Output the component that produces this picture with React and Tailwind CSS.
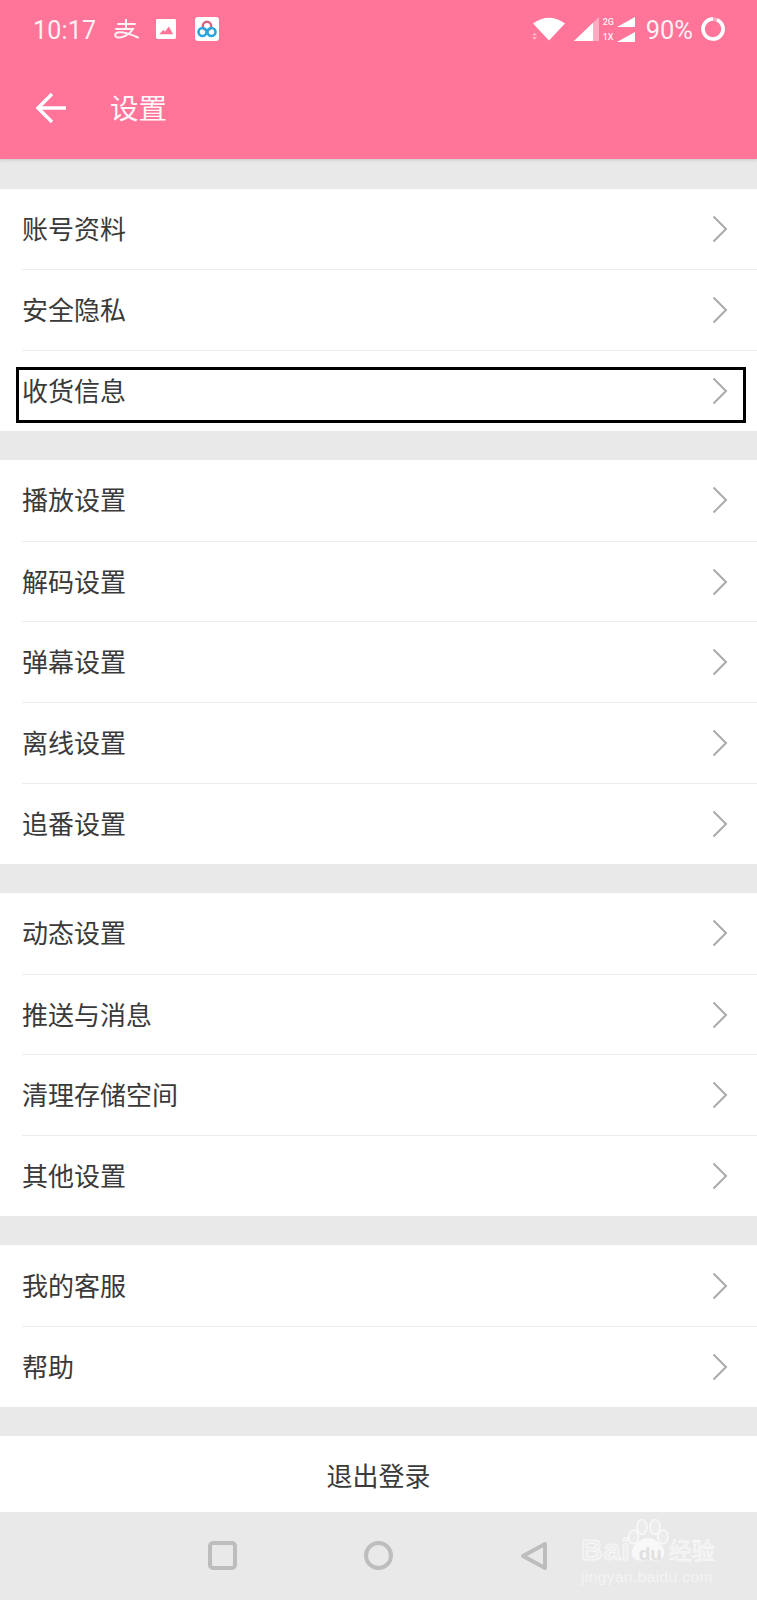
import React from 'react';

const sections = [
  ['账号资料', '安全隐私', '收货信息'],
  ['播放设置', '解码设置', '弹幕设置', '离线设置', '追番设置'],
  ['动态设置', '推送与消息', '清理存储空间', '其他设置'],
  ['我的客服', '帮助'],
];

const font = "font-['Noto_Sans_CJK_SC','Noto_Sans',sans-serif]";

const Chevron = () => (
  <svg width="16" height="28" viewBox="0 0 16 28" fill="none" className="mr-[29px]">
    <path d="M1.5 1.5 L14 14 L1.5 26.5" stroke="#aaaaaa" strokeWidth="2" />
  </svg>
);

const Row = ({ label, first, boxed }) => (
  <div className="relative h-[80.7px] pl-[22px]">
    <div className={`flex h-full items-center justify-between ${first ? '' : 'border-t border-[#ececec]'}`}>
      <span className="pb-[3px] text-[26px] text-[#3a3a3a]">{label}</span>
      <Chevron />
    </div>
    {/* marker box from the screenshot */}
    {boxed && <div className="absolute left-[16px] top-[17px] h-[56px] w-[730px] border-[3px] border-black" />}
  </div>
);

const AlipayLogo = () => (
  <svg width="26" height="20" viewBox="0 0 26 20" fill="none" stroke="#fff" strokeWidth="2" strokeLinecap="round" className="ml-[17px] opacity-90">
    <path d="M5 5 H22" />
    <path d="M13 0.5 V10" />
    <path d="M3 10 H20 C17 15 10 19 5 18.5 C1.5 18 1 14.5 5 13.5 C10 12.5 18 15.5 25 18.5" />
  </svg>
);

const StatusBar = () => (
  <div className="flex h-[58px] items-center pl-[33px] pr-[31px] text-white">
    <span className="mt-[2px] font-['Roboto',sans-serif] text-[25px] leading-none tracking-[0.2px] opacity-90">10:17</span>
    <AlipayLogo />
    <svg width="20" height="20" viewBox="0 0 21 21" className="ml-[17px]">
      <rect width="21" height="21" rx="1.5" fill="#fff" />
      <path d="M3.5 16 L7.5 11.5 L9.5 13 L13.5 8 L18 16 Z" fill="#ff7499" />
    </svg>
    <svg width="24" height="24" viewBox="0 0 24 24" className="ml-[19px]">
      <rect width="24" height="24" rx="3" fill="#fff" />
      <circle cx="12" cy="9" r="4.2" fill="none" stroke="#e0607f" strokeWidth="2.4" />
      <circle cx="7.5" cy="15" r="4" fill="none" stroke="#2aa6dc" strokeWidth="2.6" />
      <circle cx="16.5" cy="15" r="4" fill="none" stroke="#2aa6dc" strokeWidth="2.6" />
    </svg>
    <div className="ml-auto flex items-center">
      <svg width="34" height="24" viewBox="0 0 34 24">
        <path d="M1 6.5 Q17 -5 33 6.5 L17 23.5 Z" fill="#fff" />
        <path d="M0 18.5 L2.5 15.5 L5 18.5 Z M0 20 L5 20 L2.5 23 Z" fill="#ffffff" opacity="0.45" />
      </svg>
      <svg width="25" height="24" viewBox="0 0 25 24" className="ml-[8px]">
        <path d="M0 24 L25 0 L25 24 Z" fill="#ffffff" opacity="0.4" />
        <path d="M0 24 L19 5.8 L19 24 Z" fill="#fff" />
      </svg>
      <div className="ml-[4px] flex h-[25px] flex-col justify-between font-['Roboto',sans-serif] text-[9px] font-medium leading-[10px]">
        <div className="flex items-center gap-[3px]">
          <span className="w-[11px] opacity-90">2G</span>
          <svg width="18" height="10" viewBox="0 0 18 10"><path d="M0 10 L18 0 L18 10 Z" fill="#fff" /></svg>
        </div>
        <div className="flex items-center gap-[3px]">
          <span className="w-[11px] opacity-90">1X</span>
          <svg width="18" height="10" viewBox="0 0 18 10"><path d="M0 10 L18 0 L18 10 Z" fill="#fff" /></svg>
        </div>
      </div>
      <span className="ml-[11px] mt-[3px] font-['Roboto',sans-serif] text-[25.5px] leading-none opacity-90">90%</span>
      <svg width="26" height="26" viewBox="0 0 26 26" className="ml-[7px]">
        <circle cx="13" cy="13" r="10" fill="none" stroke="#ffffff" strokeOpacity="0.4" strokeWidth="3.6" />
        <path d="M17 3.8 A10 10 0 1 1 13 3" fill="none" stroke="#fff" strokeWidth="3.6" />
      </svg>
    </div>
  </div>
);

const Watermark = () => (
  <div className="absolute left-[581px] top-[6px] h-[72px] w-[136px] font-['Liberation_Sans',sans-serif]">
    {/* paw */}
    <svg width="44" height="44" viewBox="0 0 44 44" className="absolute left-[45px] top-0" fill="#ececec" stroke="#f8f8f8" strokeWidth="1.6">
      <ellipse cx="16" cy="9" rx="5" ry="7.5" />
      <ellipse cx="29" cy="9" rx="5" ry="7.5" />
      <ellipse cx="7.5" cy="19" rx="5" ry="7" />
      <ellipse cx="37" cy="19" rx="5" ry="7" />
      <path d="M22 21 C30 21 40 30 37 38 C34 44 27 41 22 41 C17 41 10 44 7 38 C4 30 14 21 22 21 Z" fill="#f8f8f8" />
    </svg>
    <div className="absolute left-0 top-[19px] flex h-[26px] w-full items-center">
      <span className="text-[30px] font-bold leading-none tracking-[1px] text-[#ededed] [-webkit-text-stroke:1px_#f8f8f8]">Bai</span>
      <span className="relative ml-[8px] mt-[8px] w-[26px] text-[19px] font-bold leading-none text-[#e0e0e0]">du</span>
      <span className={`ml-[4px] text-[23px] leading-none text-[#eeeeee] [-webkit-text-stroke:0.8px_#f8f8f8] ${font}`}>经验</span>
    </div>
    <div className="absolute left-0 top-[50px] whitespace-nowrap text-[15.5px] leading-[18px] tracking-[0.4px] text-[#f4f4f4]">jingyan.baidu.com</div>
  </div>
);

const App = () => {
  return (
    <div className={`flex h-[1600px] w-[757px] flex-col overflow-hidden bg-[#e9e9e9] ${font}`}>
      <header className="relative z-10 h-[159px] bg-[#ff7499] shadow-[0_1px_3px_rgba(0,0,0,0.15)]">
        <StatusBar />
        <div className="flex h-[101px] items-center pb-[2px] pl-[36px] text-white">
          <svg width="32" height="32" viewBox="0 0 32 32" fill="none" stroke="#fff" strokeWidth="3.4">
            <path d="M2 16 H30 M16 2 L2 16 L16 30" />
          </svg>
          <span className="ml-[42px] text-[28.5px] leading-none opacity-95">设置</span>
        </div>
      </header>

      <main className="flex flex-col">
        {sections.map((rows) => (
          <section key={rows[0]} className="mt-[29.5px] bg-white">
            {rows.map((label, i) => (
              <Row key={label} label={label} first={i === 0} boxed={label === '收货信息'} />
            ))}
          </section>
        ))}
        <button className="mt-[29.5px] flex h-[75.4px] items-center justify-center bg-white pt-[2px] text-[26px] text-[#3a3a3a]">
          退出登录
        </button>
      </main>

      <nav className="relative flex-1">
        <div className="flex h-full items-center justify-center gap-[127px]">
          <div className="h-[29px] w-[29px] rounded-[5px] border-[4px] border-[#bdbdbd]" />
          <div className="h-[29px] w-[29px] rounded-full border-[4px] border-[#bdbdbd]" />
          <svg width="29" height="30" viewBox="0 0 29 30" fill="none" stroke="#bdbdbd" strokeWidth="4" strokeLinejoin="round">
            <path d="M25 3 L3 15 L25 27 Z" />
          </svg>
        </div>
        <Watermark />
      </nav>
    </div>
  );
};

export default App;
